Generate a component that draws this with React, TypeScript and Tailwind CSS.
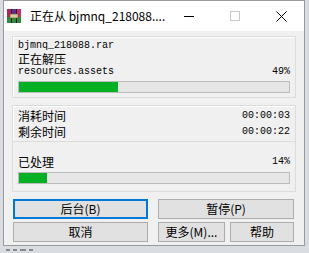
import React from 'react';

const cjk = { fontFamily: '"Noto Sans CJK SC", "Microsoft YaHei", sans-serif' };
const mono = { fontFamily: '"Liberation Mono", "DejaVu Sans Mono", monospace' };

const RarIcon: React.FC = () => (
  <svg width="14" height="14" viewBox="0 0 14 14">
    <rect x="0" y="0" width="14" height="14" fill="#7b1f4a" />
    <rect x="0" y="0" width="4" height="8" fill="#b0275a" />
    <rect x="5" y="0" width="4" height="8" fill="#5a2f8f" />
    <rect x="10" y="0" width="4" height="8" fill="#c0306a" />
    <rect x="0" y="8" width="14" height="6" fill="#2f8a3a" />
    <rect x="4" y="0" width="1" height="14" fill="#3a1030" />
    <rect x="9" y="0" width="1" height="14" fill="#3a1030" />
    <rect x="3" y="5" width="8" height="4" fill="#d8c9a0" stroke="#6b5a30" strokeWidth="0.6" />
  </svg>
);

const Bar: React.FC<{ pct: number }> = ({ pct }) => (
  <div className="h-[12px] border border-[#bcbcbc] bg-[#e6e6e6]">
    <div className="h-full bg-[#06b025]" style={{ width: `${pct}%` }} />
  </div>
);

const Btn: React.FC<{ w: string; focus?: boolean; children: React.ReactNode }> = ({ w, focus, children }) => (
  <div
    className={`${w} h-[20px] flex items-center justify-center bg-[#e1e1e1] text-[12px] leading-[14px] text-black ${
      focus ? 'border-2 border-[#0078d7]' : 'border border-[#adadad]'
    }`}
  >
    {children}
  </div>
);

export default function App() {
  return (
    <div className="w-[309px] h-[253px] bg-[#d9dde2] overflow-hidden">
      <div className="ml-[3px] w-[302px] h-[246px] border border-[#9a9a9a] bg-[#f0f0f0] flex flex-col">
        {/* title bar */}
        <div className="h-[30px] bg-white flex items-center shrink-0">
          <div className="ml-[3px]"><RarIcon /></div>
          <div className="ml-[9px] text-[12px] text-black whitespace-nowrap" style={cjk}>
            正在从 bjmnq_218088....
          </div>
          <div className="ml-auto flex items-center h-full">
            <div className="w-[46px] h-full flex items-center justify-center">
              <div className="w-[10px] h-px bg-black" />
            </div>
            <div className="w-[46px] h-full flex items-center justify-center">
              <div className="w-[10px] h-[10px] border border-[#c8c8c8]" />
            </div>
            <div className="w-[46px] h-full flex items-center justify-center">
              <svg width="11" height="11" viewBox="0 0 11 11">
                <path d="M0.5 0.5 L10.5 10.5 M10.5 0.5 L0.5 10.5" stroke="#000" strokeWidth="1" />
              </svg>
            </div>
          </div>
        </div>

        {/* body */}
        <div className="pl-[8px] pr-[8px] pt-[5px] flex flex-col">
          <div className="border border-[#dcdcdc] shadow-[inset_1px_1px_0_#fff] px-[5px] pt-[3px] h-[62px]">
            <div className="h-[12px] leading-[12px] text-[10px] text-black" style={mono}>bjmnq_218088.rar</div>
            <div className="h-[13px] leading-[13px] text-[12px] text-black" style={cjk}>正在解压</div>
            <div className="h-[13px] leading-[13px] text-[10px] text-black flex justify-between" style={mono}>
              <span>resources.assets</span>
              <span>49%</span>
            </div>
            <div className="mt-[3px]"><Bar pct={36.5} /></div>
          </div>

          <div className="mt-[7px] border border-[#dcdcdc] shadow-[inset_1px_1px_0_#fff] px-[5px] pt-[2px] h-[37px]">
            <div className="h-[16px] leading-[16px] flex justify-between items-center text-black">
              <span className="text-[12px]" style={cjk}>消耗时间</span>
              <span className="text-[10px]" style={mono}>00:00:03</span>
            </div>
            <div className="h-[16px] leading-[16px] flex justify-between items-center text-black">
              <span className="text-[12px]" style={cjk}>剩余时间</span>
              <span className="text-[10px]" style={mono}>00:00:22</span>
            </div>
          </div>

          <div className="border border-t-0 border-[#dcdcdc] px-[5px] pt-[13px] h-[50px]">
            <div className="h-[14px] leading-[14px] flex justify-between text-black">
              <span className="text-[12px]" style={cjk}>已处理</span>
              <span className="text-[10px]" style={mono}>14%</span>
            </div>
            <div className="mt-[3px]"><Bar pct={10.5} /></div>
          </div>

          <div className="mt-[7px] flex justify-between pl-[1px] pr-[2px]" style={cjk}>
            <Btn w="w-[135px]" focus>后台(B)</Btn>
            <Btn w="w-[136px]">暂停(P)</Btn>
          </div>
          <div className="mt-[3px] flex pl-[1px] pr-[2px]" style={cjk}>
            <Btn w="w-[135px]">取消</Btn>
            <div className="ml-auto flex gap-[5px]">
              <Btn w="w-[67px]">更多(M)...</Btn>
              <Btn w="w-[64px]">帮助</Btn>
            </div>
          </div>
        </div>
      </div>
      <div className="mt-[3px] ml-[6px] flex gap-[3px]">
        <div className="w-[4px] h-[2px] bg-[#8a8a8a]" />
        <div className="w-[4px] h-[2px] bg-[#8a8a8a]" />
        <div className="w-[6px] h-[2px] bg-[#8a8a8a]" />
        <div className="w-[4px] h-[2px] bg-[#8a8a8a]" />
      </div>
    </div>
  );
}
